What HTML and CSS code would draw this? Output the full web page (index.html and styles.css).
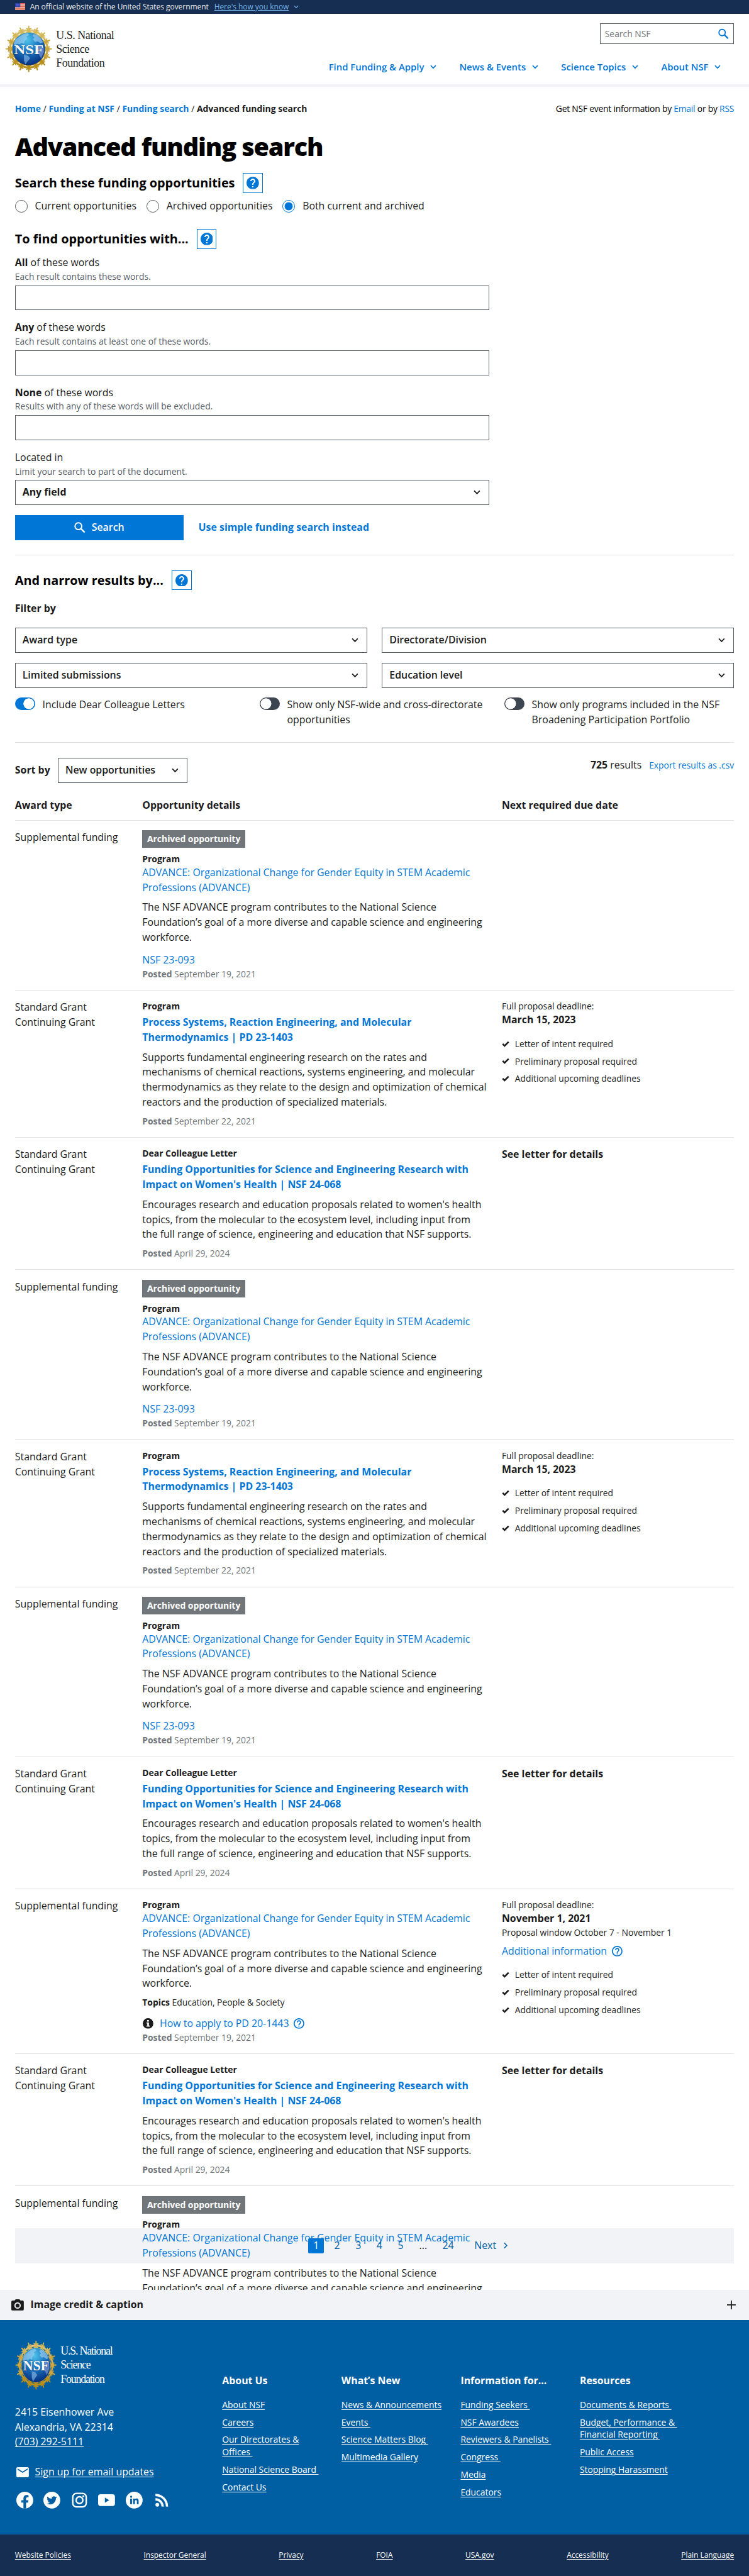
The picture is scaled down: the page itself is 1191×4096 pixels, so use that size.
FILE: index.html
```html
<!DOCTYPE html>
<html lang="en">
<head>
<meta charset="utf-8">
<title>Advanced funding search | NSF</title>
<link rel="stylesheet" href="styles.css">
</head>
<body>
<svg class="defs" width="0" height="0" aria-hidden="true">
  <defs>
    <linearGradient id="gold" x1="0" y1="0" x2="0" y2="1"><stop offset="0" stop-color="#dcc473"/><stop offset="1" stop-color="#b78d17"/></linearGradient>
    <radialGradient id="sea" cx="0.45" cy="0.22" r="0.8"><stop offset="0" stop-color="#4fc3ea"/><stop offset="0.45" stop-color="#1c7ac4"/><stop offset="1" stop-color="#052c7c"/></radialGradient>
    <g id="person"><path d="M46.9 17 L48 9.5 L43.8 7.6 L44.4 6 L48.6 6.6 L48.6 2.2 Q50 -0.6 51.4 2.2 L51.4 6.6 L55.6 6 L56.2 7.6 L52 9.5 L53.1 17 Z"/><path d="M48.2 8 L51.8 8 L53 13 L57 15.5 L55.5 18 L44.5 18 L43 15.5 L47 13 Z"/></g>
    <symbol id="seal" viewBox="0 0 100 100">
      <g fill="url(#gold)">
        <path fill-rule="evenodd" d="M50 8.6a41.4 41.4 0 1 0 0 82.8a41.4 41.4 0 1 0 0-82.8zM50 12.8a37.2 37.2 0 1 1 0 74.4a37.2 37.2 0 1 1 0-74.4z"/>
      </g>
      <g fill="#d4b858">
        <use href="#person"/><use href="#person" transform="rotate(22.5 50 50)"/><use href="#person" transform="rotate(45 50 50)"/><use href="#person" transform="rotate(-22.5 50 50)"/><use href="#person" transform="rotate(-45 50 50)"/>
      </g>
      <g fill="#caa640">
        <use href="#person" transform="rotate(67.5 50 50)"/><use href="#person" transform="rotate(90 50 50)"/><use href="#person" transform="rotate(112.5 50 50)"/><use href="#person" transform="rotate(-67.5 50 50)"/><use href="#person" transform="rotate(-90 50 50)"/><use href="#person" transform="rotate(-112.5 50 50)"/>
      </g>
      <g fill="#b98f1c">
        <use href="#person" transform="rotate(135 50 50)"/><use href="#person" transform="rotate(157.5 50 50)"/><use href="#person" transform="rotate(180 50 50)"/><use href="#person" transform="rotate(-157.5 50 50)"/><use href="#person" transform="rotate(-135 50 50)"/>
      </g>
      <circle cx="50" cy="50" r="34.5" fill="url(#sea)"/>
      <path fill="#9fd0ef" opacity=".65" d="M31 24l8-5 9-2 3 4-6 3 2 4-5 5-2 6-5-2-4 3-5-1-5 4-3-4 4-9zM60 19l7 1 8 7 5 9-5 2-6-4-6 1-4-5 3-4-4-3z"/>
      <path fill="#8fa3e0" opacity=".6" d="M72 44l9 1 1 12-6 13-5-9-6-4 1-9z"/>
      <path fill="#8fc0ec" opacity=".6" d="M40 62l9 3 4 5-6 7-4 6-3-8z"/>
      <text x="50" y="60.500" text-anchor="middle" textLength="62" lengthAdjust="spacingAndGlyphs" class="seal-text">NSF</text>
    </symbol>
    <symbol id="chev" viewBox="0 0 12 8"><path d="M1.2 1.2L6 6.2L10.8 1.2" fill="none" stroke="currentColor" stroke-width="1.9"/></symbol>
    <symbol id="glass" viewBox="0 0 18 18"><circle cx="6.7" cy="6.7" r="5.4" fill="none" stroke="currentColor" stroke-width="2"/><path d="M10.8 10.8L16.8 16.8" stroke="currentColor" stroke-width="2.4"/></symbol>
    <symbol id="help" viewBox="2 2 20 20"><path fill="currentColor" d="M12 2C6.48 2 2 6.48 2 12s4.48 10 10 10 10-4.48 10-10S17.52 2 12 2zm1 17h-2v-2h2v2zm2.07-7.75l-.9.92C13.45 12.9 13 13.5 13 15h-2v-.5c0-1.1.45-2.1 1.17-2.83l1.24-1.26c.37-.36.59-.86.59-1.41 0-1.1-.9-2-2-2s-2 .9-2 2H8c0-2.21 1.79-4 4-4s4 1.79 4 4c0 .88-.36 1.68-.93 2.25z"/></symbol>
    <symbol id="helpo" viewBox="2 2 20 20"><path fill="currentColor" d="M11 18h2v-2h-2v2zm1-16C6.48 2 2 6.48 2 12s4.48 10 10 10 10-4.48 10-10S17.52 2 12 2zm0 18c-4.41 0-8-3.59-8-8s3.59-8 8-8 8 3.59 8 8-3.59 8-8 8zm0-14c-2.21 0-4 1.79-4 4h2c0-1.1.9-2 2-2s2 .9 2 2c0 2-3 1.75-3 5h2c0-2.25 3-2.5 3-5 0-2.21-1.79-4-4-4z"/></symbol>
    <symbol id="info" viewBox="2 2 20 20"><path fill="currentColor" fill-rule="evenodd" d="M12 2a10 10 0 1 0 0 20a10 10 0 1 0 0-20zM10.2 5.6h3.4v3h-3.4zM9 10h4.6v6h1.6v2H9v-2h1.5v-4H9z"/></symbol>
    <symbol id="check" viewBox="0 0 12 10"><path d="M1.3 4.9L4.4 7.9L10.8 1.6" fill="none" stroke="currentColor" stroke-width="2.7"/></symbol>
  </defs>
</svg>

<div class="banner">
  <svg class="flag" viewBox="0 0 16 11"><path fill="#fff" d="M0 0h16v11H0z"/><path stroke="#db3e1f" stroke-width=".9" d="M0 .5h16M0 2.2h16M0 3.9h16M0 5.5h16M0 7.1h16M0 8.8h16M0 10.5h16"/><path fill="#1e33b1" d="M0 0h8.3v6.4H0z"/><path stroke="#fff" stroke-width=".7" stroke-dasharray=".8 1.1" d="M.8 1.3h7M1.7 3h6M.8 4.8h7"/></svg>
  <span class="banner-text">An official website of the United States government</span>
  <a class="banner-link">Here's how you know</a>
  <svg class="banner-chev"><use href="#chev"/></svg>
</div>

<header class="header">
  <div class="brand">
    <svg class="brand-seal"><use href="#seal"/></svg>
    <div class="brand-name">U.S. National<br>Science<br>Foundation</div>
  </div>
  <div class="header-side">
    <div class="site-search"><span>Search NSF</span><svg><use href="#glass"/></svg></div>
    <nav class="nav">
      <a>Find Funding &amp; Apply <svg><use href="#chev"/></svg></a>
      <a>News &amp; Events <svg><use href="#chev"/></svg></a>
      <a>Science Topics <svg><use href="#chev"/></svg></a>
      <a>About NSF <svg><use href="#chev"/></svg></a>
    </nav>
  </div>
</header>

<main class="main">
  <div class="crumbs">
    <div class="crumbs-path"><a>Home</a> <i>/</i> <a>Funding at NSF</a> <i>/</i> <a>Funding search</a> <i>/</i> Advanced funding search</div>
    <div class="crumbs-feed">Get NSF event information by <a>Email</a> or by <a>RSS</a></div>
  </div>
  <h1>Advanced funding search</h1>
  <h2 class="h-search">Search these funding opportunities <span class="help"><svg><use href="#help"/></svg></span></h2>
  <div class="radios">
    <label><span class="radio"></span>Current opportunities</label>
    <label><span class="radio"></span>Archived opportunities</label>
    <label><span class="radio on"></span>Both current and archived</label>
  </div>
  <h2 class="h-find">To find opportunities with... <span class="help"><svg><use href="#help"/></svg></span></h2>
  <div class="fields">
    <div class="field"><div class="lbl"><b>All</b> of these words</div><div class="hint">Each result contains these words.</div><div class="box"></div></div>
    <div class="field"><div class="lbl"><b>Any</b> of these words</div><div class="hint">Each result contains at least one of these words.</div><div class="box"></div></div>
    <div class="field"><div class="lbl"><b>None</b> of these words</div><div class="hint">Results with any of these words will be excluded.</div><div class="box"></div></div>
    <div class="field"><div class="lbl">Located in</div><div class="hint">Limit your search to part of the document.</div><div class="box select bold">Any field<svg><use href="#chev"/></svg></div></div>
  </div>
  <div class="actions"><a class="button"><svg><use href="#glass"/></svg>Search</a><a class="simple">Use simple funding search instead</a></div>

  <section class="narrow">
    <h2>And narrow results by... <span class="help"><svg><use href="#help"/></svg></span></h2>
    <div class="filter-title">Filter by</div>
    <div class="filters">
      <div class="box select">Award type<svg><use href="#chev"/></svg></div>
      <div class="box select">Directorate/Division<svg><use href="#chev"/></svg></div>
      <div class="box select">Limited submissions<svg><use href="#chev"/></svg></div>
      <div class="box select">Education level<svg><use href="#chev"/></svg></div>
    </div>
    <div class="toggles">
      <div class="toggle"><span class="switch on"></span><span>Include Dear Colleague Letters</span></div>
      <div class="toggle"><span class="switch"></span><span>Show only NSF-wide and cross-directorate opportunities</span></div>
      <div class="toggle"><span class="switch"></span><span>Show only programs included in the NSF Broadening Participation Portfolio</span></div>
    </div>
  </section>

  <section class="results">
    <div class="sortbar">
      <div class="sort"><b>Sort by</b><div class="box select">New opportunities<svg><use href="#chev"/></svg></div></div>
      <div class="count"><span><b>725</b> results</span><a>Export results as .csv</a></div>
    </div>
    <div class="thead"><div>Award type</div><div>Opportunity details</div><div>Next required due date</div></div>

    <div class="clip">
      <div class="pager-band"></div>
      <div class="rows">
        <article class="row archived">
          <div class="award">Supplemental funding</div>
          <div class="details"><span class="badge">Archived opportunity</span><div class="kind">Program</div><a class="title">ADVANCE: Organizational Change for Gender Equity in STEM Academic Professions (ADVANCE)</a><p>The NSF ADVANCE program contributes to the National Science Foundation’s goal of a more diverse and capable science and engineering workforce.</p><a class="ref">NSF 23-093</a><div class="posted"><b>Posted</b> September 19, 2021</div></div>
        </article>
        <article class="row">
          <div class="award">Standard Grant<br>Continuing Grant</div>
          <div class="details"><div class="kind">Program</div><a class="title strong">Process Systems, Reaction Engineering, and Molecular Thermodynamics | PD 23-1403</a><p>Supports fundamental engineering research on the rates and mechanisms of chemical reactions, systems engineering, and molecular thermodynamics as they relate to the design and optimization of chemical reactors and the production of specialized materials.</p><div class="posted"><b>Posted</b> September 22, 2021</div></div>
          <div class="due"><small>Full proposal deadline:</small><b>March 15, 2023</b><ul><li><svg><use href="#check"/></svg>Letter of intent required</li><li><svg><use href="#check"/></svg>Preliminary proposal required</li><li><svg><use href="#check"/></svg>Additional upcoming deadlines</li></ul></div>
        </article>
        <article class="row">
          <div class="award">Standard Grant<br>Continuing Grant</div>
          <div class="details"><div class="kind">Dear Colleague Letter</div><a class="title strong">Funding Opportunities for Science and Engineering Research with Impact on Women's Health | NSF 24-068</a><p>Encourages research and education proposals related to women's health topics, from the molecular to the ecosystem level, including input from the full range of science, engineering and education that NSF supports.</p><div class="posted"><b>Posted</b> April 29, 2024</div></div>
          <div class="due"><b>See letter for details</b></div>
        </article>
        <article class="row archived">
          <div class="award">Supplemental funding</div>
          <div class="details"><span class="badge">Archived opportunity</span><div class="kind">Program</div><a class="title">ADVANCE: Organizational Change for Gender Equity in STEM Academic Professions (ADVANCE)</a><p>The NSF ADVANCE program contributes to the National Science Foundation’s goal of a more diverse and capable science and engineering workforce.</p><a class="ref">NSF 23-093</a><div class="posted"><b>Posted</b> September 19, 2021</div></div>
        </article>
        <article class="row">
          <div class="award">Standard Grant<br>Continuing Grant</div>
          <div class="details"><div class="kind">Program</div><a class="title strong">Process Systems, Reaction Engineering, and Molecular Thermodynamics | PD 23-1403</a><p>Supports fundamental engineering research on the rates and mechanisms of chemical reactions, systems engineering, and molecular thermodynamics as they relate to the design and optimization of chemical reactors and the production of specialized materials.</p><div class="posted"><b>Posted</b> September 22, 2021</div></div>
          <div class="due"><small>Full proposal deadline:</small><b>March 15, 2023</b><ul><li><svg><use href="#check"/></svg>Letter of intent required</li><li><svg><use href="#check"/></svg>Preliminary proposal required</li><li><svg><use href="#check"/></svg>Additional upcoming deadlines</li></ul></div>
        </article>
        <article class="row archived">
          <div class="award">Supplemental funding</div>
          <div class="details"><span class="badge">Archived opportunity</span><div class="kind">Program</div><a class="title">ADVANCE: Organizational Change for Gender Equity in STEM Academic Professions (ADVANCE)</a><p>The NSF ADVANCE program contributes to the National Science Foundation’s goal of a more diverse and capable science and engineering workforce.</p><a class="ref">NSF 23-093</a><div class="posted"><b>Posted</b> September 19, 2021</div></div>
        </article>
        <article class="row">
          <div class="award">Standard Grant<br>Continuing Grant</div>
          <div class="details"><div class="kind">Dear Colleague Letter</div><a class="title strong">Funding Opportunities for Science and Engineering Research with Impact on Women's Health | NSF 24-068</a><p>Encourages research and education proposals related to women's health topics, from the molecular to the ecosystem level, including input from the full range of science, engineering and education that NSF supports.</p><div class="posted"><b>Posted</b> April 29, 2024</div></div>
          <div class="due"><b>See letter for details</b></div>
        </article>
        <article class="row">
          <div class="award">Supplemental funding</div>
          <div class="details"><div class="kind">Program</div><a class="title">ADVANCE: Organizational Change for Gender Equity in STEM Academic Professions (ADVANCE)</a><p>The NSF ADVANCE program contributes to the National Science Foundation’s goal of a more diverse and capable science and engineering workforce.</p><div class="topics"><b>Topics</b> Education, People &amp; Society</div><div class="apply"><svg class="i-info"><use href="#info"/></svg><a>How to apply to PD 20-1443</a><svg class="i-help"><use href="#helpo"/></svg></div><div class="posted tight"><b>Posted</b> September 19, 2021</div></div>
          <div class="due"><small>Full proposal deadline:</small><b>November 1, 2021</b><small>Proposal window October 7 - November 1</small><div class="more"><a>Additional information</a><svg class="i-help"><use href="#helpo"/></svg></div><ul><li><svg><use href="#check"/></svg>Letter of intent required</li><li><svg><use href="#check"/></svg>Preliminary proposal required</li><li><svg><use href="#check"/></svg>Additional upcoming deadlines</li></ul></div>
        </article>
        <article class="row">
          <div class="award">Standard Grant<br>Continuing Grant</div>
          <div class="details"><div class="kind">Dear Colleague Letter</div><a class="title strong">Funding Opportunities for Science and Engineering Research with Impact on Women's Health | NSF 24-068</a><p>Encourages research and education proposals related to women's health topics, from the molecular to the ecosystem level, including input from the full range of science, engineering and education that NSF supports.</p><div class="posted"><b>Posted</b> April 29, 2024</div></div>
          <div class="due"><b>See letter for details</b></div>
        </article>
        <article class="row archived">
          <div class="award">Supplemental funding</div>
          <div class="details"><span class="badge">Archived opportunity</span><div class="kind">Program</div><a class="title">ADVANCE: Organizational Change for Gender Equity in STEM Academic Professions (ADVANCE)</a><p>The NSF ADVANCE program contributes to the National Science Foundation’s goal of a more diverse and capable science and engineering</p></div>
        </article>
      </div>
      <nav class="pager"><span class="current">1</span><a>2</a><a>3</a><a>4</a><a>5</a><span class="dots">...</span><a class="last">24</a><a class="next">Next <svg viewBox="0 0 7 12"><path d="M1 1l4.6 5L1 11" fill="none" stroke="currentColor" stroke-width="1.9"/></svg></a></nav>
    </div>
  </section>
</main>

<div class="credit">
  <svg class="camera" viewBox="0 0 20 18"><path fill="currentColor" fill-rule="evenodd" d="M7 0h6l1.8 2H18a2 2 0 0 1 2 2v12a2 2 0 0 1-2 2H2a2 2 0 0 1-2-2V4a2 2 0 0 1 2-2h3.200zM10 4.800a5.200 5.200 0 1 0 0 10.400a5.200 5.200 0 1 0 0-10.400zM10 6.800a3.200 3.200 0 1 1 0 6.400a3.200 3.200 0 1 1 0-6.400z"/></svg>
  <b>Image credit &amp; caption</b>
  <svg class="plus" viewBox="0 0 14 14"><path d="M7 0v14M0 7h14" stroke="currentColor" stroke-width="1.8"/></svg>
</div>

<footer class="footer">
  <div class="contact">
    <div class="brand foot">
      <svg class="brand-seal" viewBox="0 0 100 100" preserveAspectRatio="none"><use href="#seal" width="100" height="100"/></svg>
      <div class="brand-name">U.S. National<br>Science<br>Foundation</div>
    </div>
    <address>2415 Eisenhower Ave<br>Alexandria, VA 22314<br><a>(703) 292-5111</a></address>
    <div class="signup"><svg viewBox="2 4 20 16"><path fill="#fff" d="M20 4H4c-1.100 0-1.990.9-1.990 2L2 18c0 1.100.9 2 2 2h16c1.100 0 2-.9 2-2V6c0-1.100-.9-2-2-2zm0 4l-8 5-8-5V6l8 5 8-5v2z"/></svg><a>Sign up for email updates</a></div>
    <div class="social">
      <svg viewBox="0 0 27 27"><circle cx="13.500" cy="13.500" r="13.500" fill="#fff"/><path fill="#005ea2" d="M11.400 27v-9.500H7.900v-4h3.500v-3c0-3.400 2-5.300 5.100-5.300 1.500 0 3 .3 3 .3v3.400h-1.700c-1.700 0-2.200 1-2.200 2.100v2.500h3.800l-.6 4h-3.200V27z"/></svg>
      <svg viewBox="0 0 27 27"><circle cx="13.500" cy="13.500" r="13.500" fill="#fff"/><path fill="#005ea2" transform="translate(5.500 5.500) scale(.68)" d="M23.640 4.940c-.87.390-1.810.650-2.790.770 1-.600 1.770-1.550 2.130-2.690-.940.560-1.980.960-3.090 1.180a4.860 4.860 0 0 0-8.280 4.430C7.580 8.430 4 6.500 1.610 3.560a4.860 4.860 0 0 0 1.500 6.490c-.8-.03-1.550-.24-2.200-.61v.06c0 2.350 1.670 4.320 3.900 4.760-.73.200-1.500.230-2.200.090a4.860 4.860 0 0 0 4.540 3.370A9.760 9.760 0 0 1 0 19.730a13.770 13.770 0 0 0 7.450 2.180c8.940 0 13.830-7.400 13.830-13.820l-.02-.63c.95-.68 1.770-1.540 2.380-2.520z"/></svg>
      <svg viewBox="0 0 27 27"><rect x="2.700" y="2.700" width="21.600" height="21.600" rx="6" fill="none" stroke="#fff" stroke-width="2.400"/><circle cx="13.500" cy="13.500" r="5.400" fill="none" stroke="#fff" stroke-width="2.400"/><circle cx="19.700" cy="7.300" r="1.500" fill="#fff"/></svg>
      <svg viewBox="0 0 27 27"><rect y="4" width="27" height="19" rx="4" fill="#fff"/><path d="M10.800 9.300v8.400l7-4.200z" fill="#005ea2"/></svg>
      <svg viewBox="0 0 27 27"><circle cx="13.500" cy="13.500" r="13.500" fill="#fff"/><path fill="#005ea2" d="M7.100 11h2.900v9H7.100zM8.550 6.400a1.700 1.700 0 1 1 0 3.400a1.700 1.700 0 0 1 0-3.400zM11.700 11h2.700v1.300c.5-.9 1.500-1.500 2.800-1.500 2.900 0 3.400 1.900 3.400 4.300V20h-2.800v-4.300c0-1.100 0-2.400-1.500-2.400s-1.700 1.200-1.700 2.300V20h-2.900z"/></svg>
      <svg viewBox="0 0 27 27"><circle cx="6.200" cy="21" r="3" fill="#fff"/><path d="M3.200 12.200a11.500 11.500 0 0 1 11.500 11.600M3.200 5.200a18.500 18.500 0 0 1 18.500 18.600" fill="none" stroke="#fff" stroke-width="3.600"/></svg>
    </div>
  </div>
  <div class="cols">
    <div><h3>About Us</h3><a>About NSF</a><a>Careers</a><a>Our Directorates &amp; Offices&nbsp;</a><a>National Science Board&nbsp;</a><a>Contact Us</a></div>
    <div><h3>What’s New</h3><a>News &amp; Announcements</a><a>Events&nbsp;</a><a>Science Matters Blog&nbsp;</a><a>Multimedia Gallery</a></div>
    <div><h3>Information for...</h3><a>Funding Seekers&nbsp;</a><a>NSF Awardees</a><a>Reviewers &amp; Panelists&nbsp;</a><a>Congress&nbsp;</a><a>Media</a><a>Educators</a></div>
    <div><h3>Resources</h3><a>Documents &amp; Reports&nbsp;</a><a>Budget, Performance &amp;&nbsp;<br>Financial Reporting&nbsp;</a><a>Public Access</a><a>Stopping Harassment</a></div>
  </div>
</footer>
<div class="legal"><a>Website Policies</a><a>Inspector General</a><a>Privacy</a><a>FOIA</a><a>USA.gov</a><a>Accessibility</a><a>Plain Language</a></div>
</body>
</html>
```
FILE: styles.css
```css
* { box-sizing: border-box; }
html { background: #fff; }
body {
  zoom: 0.9925;
  margin: 0;
  height: 4127px;
  overflow: hidden;
  font: 16px/24px "Open Sans", sans-serif;
  color: #1b1b1b;
}
.defs { display: block; }
a { color: #0076d6; }
h1, h2, h3, p, ul { margin: 0; padding: 0; }
svg { display: block; flex: none; }

.banner { display: flex; align-items: center; height: 22px; padding-left: 24px; background: #162e51; font-size: 12px; line-height: 22px; color: #f0f0f0; white-space: nowrap; }
.flag { width: 16px; height: 11px; margin-right: 8px; }
.banner-link { margin-left: 9px; color: #73b3e7; text-decoration: underline; }
.banner-chev { width: 8px; height: 6px; margin-left: 8px; color: #73b3e7; }

.header { display: flex; justify-content: space-between; height: 117px; padding: 0 24px 0 8px; border-bottom: 5px solid #f1f3f6; }
.brand { display: flex; }
.brand-seal { width: 76px; height: 76px; }
.seal-text { font: bold 28px "Liberation Serif", serif; fill: #fff; stroke: #1d3c78; stroke-width: .7px; paint-order: stroke; }
.brand-name { font: 18px/22px "Liberation Serif", serif; letter-spacing: -.45px; color: #231f20; white-space: nowrap; }
.header .brand { padding-top: 18px; gap: 6px; }
.header .brand-name { padding-top: 6.5px; }
.header-side { display: flex; flex-direction: column; align-items: flex-end; }
.site-search { display: flex; justify-content: space-between; align-items: center; width: 215px; height: 33px; margin-top: 15.500px; padding: 0 7px; border: 1px solid #565c65; font-size: 14px; color: #71767a; }
.site-search svg { width: 17px; height: 18px; color: #0076d6; }
.nav { display: flex; margin-top: 25px; padding-right: 21px; gap: 36.500px; }
.nav a { display: flex; align-items: center; gap: 10px; font-size: 15px; font-weight: 600; white-space: nowrap; }
.nav svg { width: 10px; height: 7px; }

.main { padding: 25px 24px 0; }
.crumbs { display: flex; justify-content: space-between; font-size: 14px; line-height: 20px; }
.crumbs-path { font-weight: 700; letter-spacing: .04px; }
.crumbs-path i { font-style: normal; font-weight: 400; }
.crumbs-feed { color: #000; letter-spacing: -.23px; }
h1 { margin-top: 28px; font-size: 40px; line-height: 48px; font-weight: 800; letter-spacing: -1.200px; color: #000; }
h2 { display: flex; align-items: center; gap: 13px; height: 32px; font-size: 20px; line-height: 32px; font-weight: 700; color: #000; }
.help { display: flex; align-items: center; justify-content: center; width: 32px; height: 32px; border: 2px solid #0076d6; color: #0076d6; }
.help svg { width: 20px; height: 20px; }
.h-search { margin-top: 17.300px; }
.radios { display: flex; gap: 16px; margin-top: 9.500px; }
.radios label { display: flex; align-items: center; gap: 12px; }
.radio { width: 20px; height: 20px; border: 1.500px solid #565c65; border-radius: 50%; }
.radio.on { border: 2px solid #0076d6; background: radial-gradient(circle, #0076d6 0 6.200px, #fff 6.800px); }
.h-find { margin-top: 24.300px; }
.fields { display: flex; flex-direction: column; gap: 16px; width: 760px; margin-top: 10.200px; }
.hint { font-size: 14px; line-height: 20px; color: #565c65; }
.box { height: 40px; border: 1px solid #565c65; }
.hint + .box { margin-top: 4px; }
.select { display: flex; align-items: center; justify-content: space-between; padding: 0 13px 0 11px; font-weight: 600; }
.select.bold { font-weight: 700; }
.select svg { width: 11px; height: 8px; }
.actions { display: flex; align-items: center; gap: 24px; margin-top: 16px; }
.button { display: flex; align-items: center; justify-content: center; gap: 10px; width: 270px; height: 40px; background: #0076d6; color: #fff; font-weight: 600; }
.button svg { width: 18px; height: 18px; }
.simple { font-weight: 700; }

.narrow { margin-top: 23.500px; padding: 24px 0 23.500px; border-top: 1px solid #dfe1e2; }
.filter-title { margin-top: 18px; font-weight: 700; }
.filters { display: grid; grid-template-columns: 1fr 1fr; gap: 16px 24px; margin-top: 18.300px; }
.toggles { display: grid; grid-template-columns: repeat(3, 1fr); column-gap: 24px; margin-top: 16px; height: 48px; }
.toggle { display: flex; gap: 12px; align-items: flex-start; }
.switch { flex: none; width: 32px; height: 20px; border-radius: 10px; background: radial-gradient(circle at 10px 10px, #fff 0 8.300px, #3d4551 8.900px); }
.switch.on { background: radial-gradient(circle at 22px 10px, #fff 0 8.300px, #0076d6 8.900px); }

.results { border-top: 1px solid #dfe1e2; }
.sortbar { display: flex; justify-content: space-between; padding-top: 24px; }
.sort { display: flex; align-items: center; gap: 12.500px; }
.sort .box { width: 207px; }
.count { display: flex; align-items: baseline; gap: 12px; }
.count a { font-size: 14px; }
.thead, .row { display: grid; grid-template-columns: 204px 576px 1fr; }
.thead { margin-top: 24px; height: 35.500px; font-weight: 700; }
.clip { position: relative; height: 2355px; overflow: hidden; }
.rows { position: relative; z-index: 1; }
.row { height: 236px; padding-top: 15.500px; border-top: 1px solid #dfe1e2; }
.row.archived { height: 272px; }
.row:nth-child(3), .row:nth-child(7), .row:nth-child(9) { height: 212px; }
.row:nth-child(8) { height: 264px; }
.details { width: 552px; }
.badge { display: block; width: 165px; height: 28px; margin-bottom: 8px; background: #71767a; color: #fff; font-size: 14px; line-height: 28px; font-weight: 700; text-align: center; }
.kind { font-size: 14px; line-height: 20px; font-weight: 700; }
.title, .ref { display: block; }
.title.strong { margin-top: 4px; font-weight: 700; }
.details p { margin-top: 8px; }
.ref { margin-top: 12px; }
.posted { margin-top: 8px; font-size: 14px; line-height: 20px; color: #71767a; }
.ref + .posted, .posted.tight { margin-top: 0; }
.topics { margin-top: 8px; font-size: 14px; line-height: 20px; }
.apply { display: flex; align-items: center; gap: 8px; margin-top: 12px; }
.i-info, .i-help { width: 17px; height: 17px; }
.i-info { margin: 0 2px 0 1px; }
.more .i-help, .apply .i-help { color: #0076d6; }
.due small { display: block; font-size: 14px; line-height: 20px; }
.due b { display: block; }
.due ul { list-style: none; margin-top: 16px; display: grid; row-gap: 8px; font-size: 14px; line-height: 20px; }
.due li { display: flex; align-items: center; gap: 9px; }
.due li svg { width: 12px; height: 10px; }
.more { display: flex; align-items: center; gap: 8px; margin-top: 8px; }

.pager-band { position: absolute; left: 0; right: 0; top: 2256px; height: 56px; background: #f1f3f6; }
.pager { position: absolute; z-index: 2; left: 470px; top: 2272px; display: flex; font-size: 16px; line-height: 24px; }
.pager > * { width: 34px; text-align: center; color: #005ea2; }
.pager .current { width: 25px; margin-right: 4px; background: #0076d6; color: #fff; border-radius: 2px; }
.pager .dots { width: 38px; color: #1b1b1b; }
.pager .last { width: 42px; }
.pager .next { display: flex; align-items: center; gap: 12px; width: auto; margin-left: 21px; }
.pager .next svg { width: 6px; height: 11px; }

.credit { display: flex; align-items: center; height: 48px; padding: 0 21px 0 18px; background: #f1f3f6; }
.camera { width: 20px; height: 18px; margin-right: 11px; }
.plus { width: 14px; height: 14px; margin-left: auto; }

.footer { display: flex; height: 344px; padding: 32px 24px 0; background: #005ea2; color: #fff; }
.footer a, .legal a { color: #fff; text-decoration: underline; text-decoration-thickness: 1px; text-underline-offset: 2px; }
.contact { width: 332px; }
.foot { gap: 6px; }
.foot .brand-seal { width: 67px; height: 80px; }
.foot .brand-name { padding-top: 6px; font-size: 18px; line-height: 23px; color: #fff; letter-spacing: -1.200px; }
address { margin-top: 24px; font-style: normal; }
.signup { display: flex; align-items: center; gap: 10px; margin: 24px 0 0 2px; }
.signup svg { width: 20px; height: 16px; }
.social { display: flex; gap: 16.900px; margin: 19.500px 0 0 2px; }
.social svg { width: 27px; height: 27px; }
.cols { display: grid; grid-template-columns: repeat(4, 167px); column-gap: 24px; padding-top: 54px; align-content: start; }
.cols > div { display: flex; flex-direction: column; align-items: flex-start; gap: 8px; }
.cols a { font-size: 14px; line-height: 20px; }
h3 { margin-bottom: 8px; font-size: 16px; line-height: 24px; }
.legal { display: flex; justify-content: space-between; align-items: center; height: 66px; padding: 0 24px; background: #162e51; font-size: 12px; line-height: 20px; }
```
